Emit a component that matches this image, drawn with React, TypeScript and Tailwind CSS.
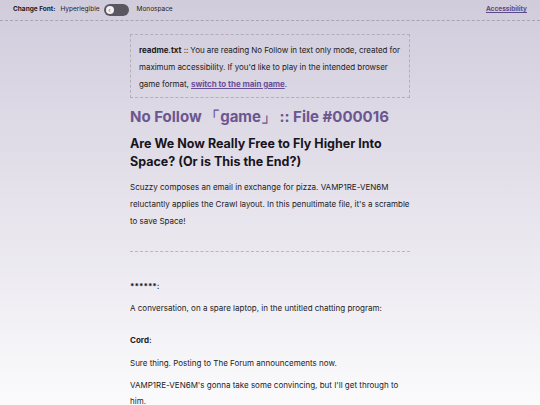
import React, { useState } from "react";

export default function App() {
  const [mono, setMono] = useState(false);

  return (
    <div
      className="min-h-screen w-full bg-gradient-to-b from-[#d1ccdc] via-[#e6e3ec] to-[#fbfbfc] text-[#1e1b22]"
      style={{ fontFamily: mono ? "'Liberation Mono', monospace" : "Inter, 'Noto Sans', sans-serif" }}
    >
      <header className="flex items-center justify-between h-[21px] pl-[13px] pr-[13px] border-b border-dashed border-[#a9a4b3]">
        <div className="flex items-center text-[6.5px]">
          <span className="font-bold">Change Font:</span>
          <span className="ml-[5px]">Hyperlegible</span>
          <button
            type="button"
            onClick={() => setMono(!mono)}
            className="relative ml-[4px] w-[25px] h-[12px] rounded-full bg-[#5a5760]"
          >
            <span className="absolute left-[2px] top-[2px] w-[8px] h-[8px] rounded-full bg-[#f2f0f5] flex items-center justify-center text-[6px] leading-none text-[#5a5760]">
              ‹
            </span>
          </button>
          <span className="ml-[8px]">Monospace</span>
        </div>
        <a href="#" className="text-[6.5px] font-bold text-[#5b4a86] underline">
          Accessibility
        </a>
      </header>

      <main className="w-[280px] mx-auto pt-[13px] text-[8px] leading-[17px]">
        <div className="border border-dashed border-[#b3aebd] pl-[8px] pr-[2px] pt-[7px] pb-[4px]">
          <p className="tracking-[-0.05px]">
            <span className="font-bold">readme.txt</span> :: You are reading No Follow in text only
            mode, created for maximum accessibility. If you'd like to play in the intended browser
            game format,{" "}
            <a href="#" className="font-bold text-[#6a4f98] underline">
              switch to the main game
            </a>
            .
          </p>
        </div>

        <h1 className="mt-[8px] text-[15px] leading-[22px] font-bold text-[#6b5690]">
          No Follow 「game」 :: File #000016
        </h1>

        <h2 className="mt-[7px] text-[12.5px] leading-[18px] font-bold text-[#17141b]">
          Are We Now Really Free to Fly Higher Into Space? (Or is This the End?)
        </h2>

        <p className="mt-[8px]">
          Scuzzy composes an email in exchange for pizza. VAMP1RE-VEN6M reluctantly applies the
          Crawl layout. In this penultimate file, it's a scramble to save Space!
        </p>

        <hr className="mt-[21px] border-0 border-t border-dashed border-[#b9b5c1]" />

        <p className="mt-[26px] font-bold">******:</p>
        <p className="mt-[5px]">A conversation, on a spare laptop, in the untitled chatting program:</p>

        <p className="mt-[15px] font-bold">Cord:</p>
        <p className="mt-[6px]">Sure thing. Posting to The Forum announcements now.</p>
        <p className="mt-[5px] leading-[16px]">
          VAMP1RE-VEN6M's gonna take some convincing, but I'll get through to him.
        </p>
      </main>
    </div>
  );
}
